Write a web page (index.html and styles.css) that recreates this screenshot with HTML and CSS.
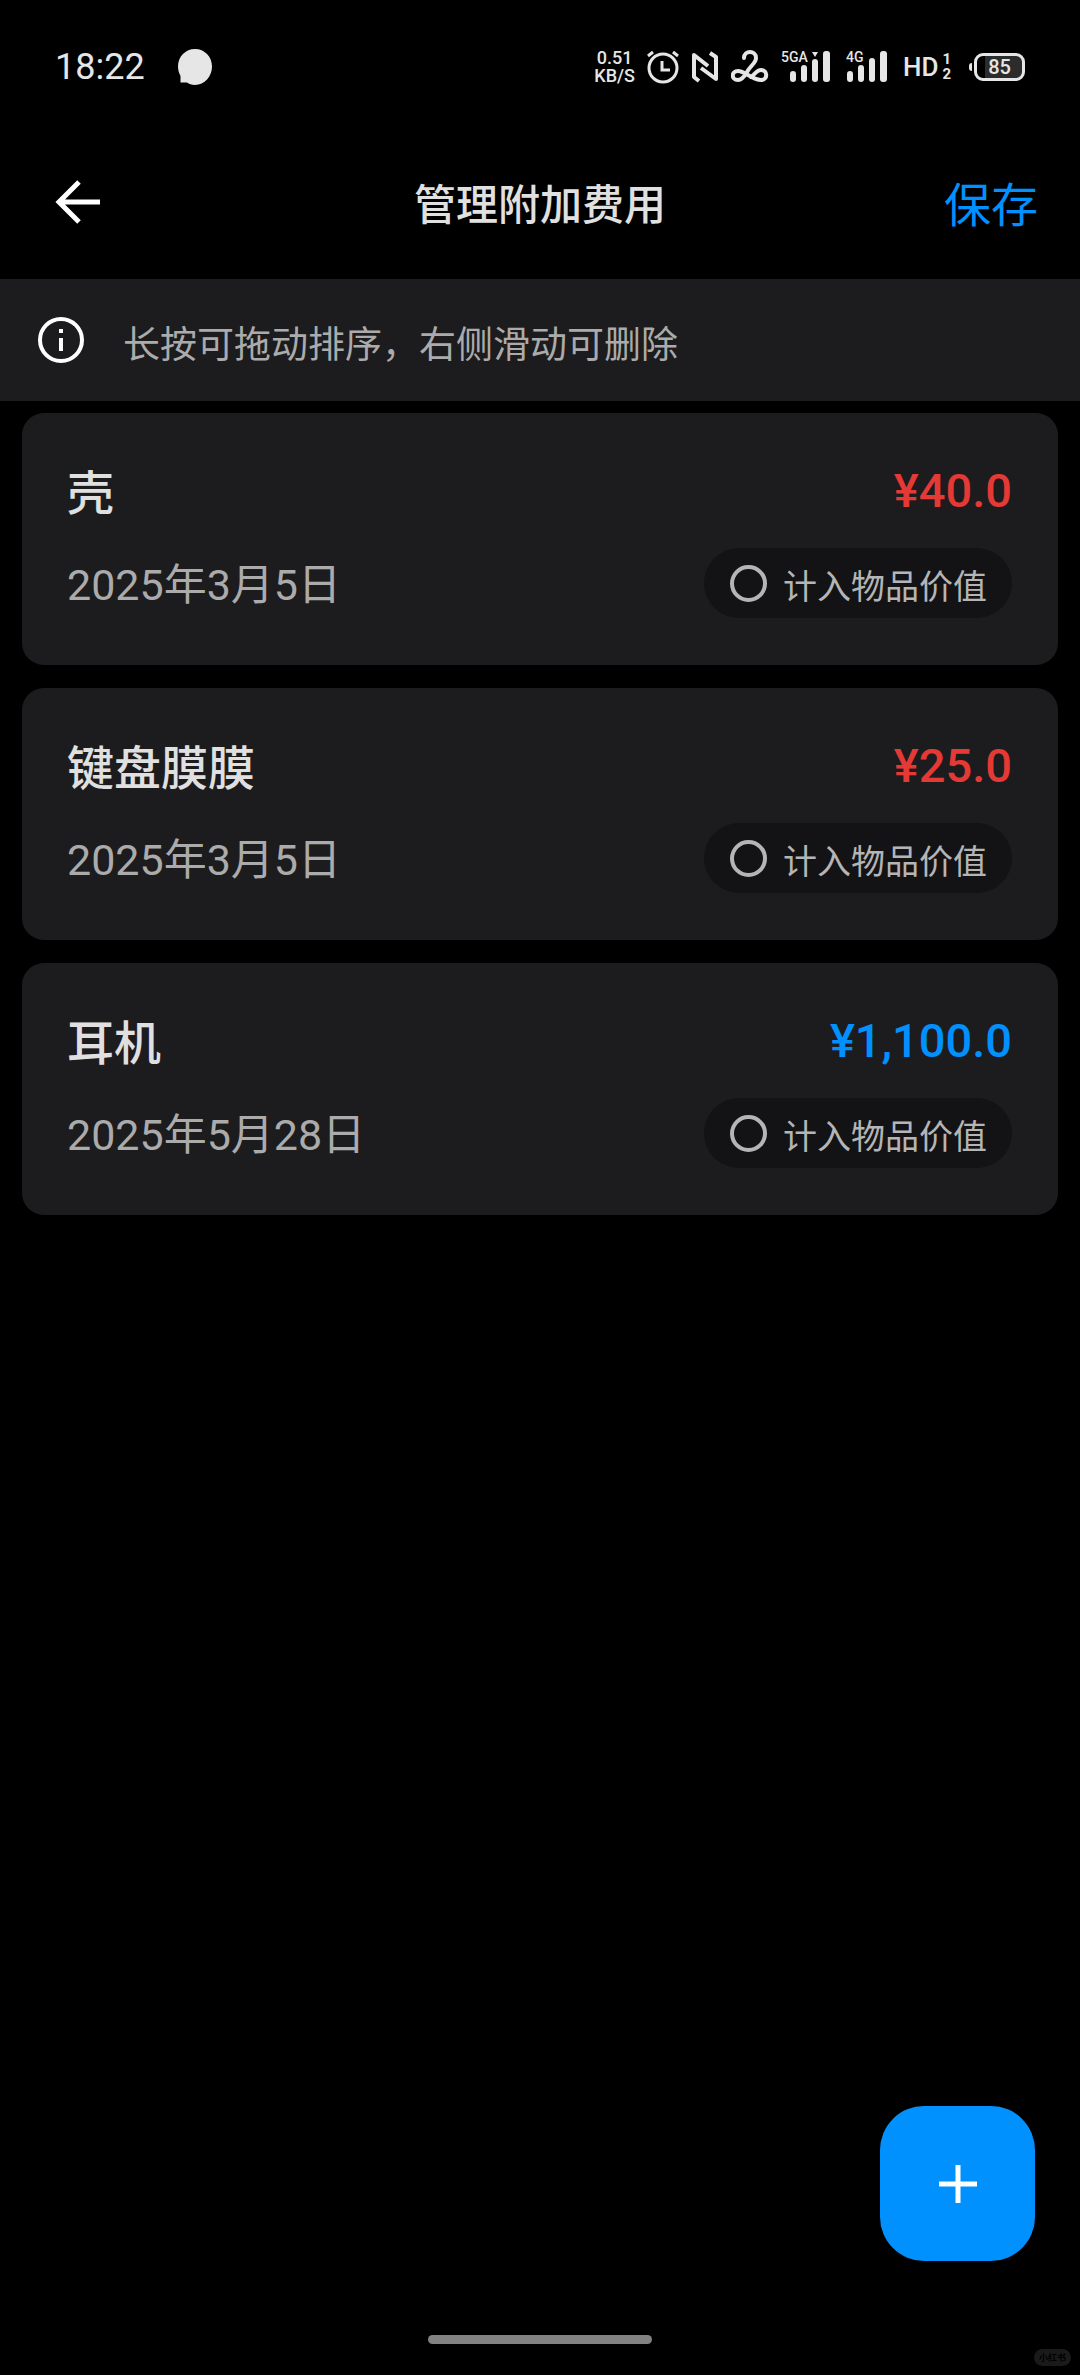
FILE: index.html
```html
<!DOCTYPE html>
<html lang="zh-CN">
<head>
<meta charset="utf-8">
<meta name="viewport" content="width=device-width, initial-scale=1">
<title>管理附加费用</title>
<link rel="stylesheet" href="styles.css">
</head>
<body>
<div class="screen">
  <div class="status-bar">
    <div class="status-left">
      <span class="clock">18:22</span>
      <svg width="36" height="36" viewBox="0 0 36 36" fill="currentColor" aria-hidden="true"><path d="M18 0C27.500 0 35 7.500 35 17.500S27.500 36 18 36C14.500 36 12 35 10 33.500H3.500V27C2 24 1 21 1 17.500C1 7.500 8.500 0 18 0Z"/></svg>
    </div>
    <div class="status-right">
      <div class="net-speed"><span>0.51</span><span>KB/S</span></div>
      <svg width="32" height="34" viewBox="0 0 32 34" fill="none" stroke="currentColor" stroke-width="3" aria-hidden="true"><circle cx="16" cy="18" r="14"/><path d="M15 11v9h8M1 6l5-4M31 6l-5-4"/></svg>
      <svg width="28" height="32" viewBox="0 0 28 32" fill="none" stroke="currentColor" stroke-width="4" stroke-linejoin="round" aria-hidden="true"><path d="M8 30L3 26V4L17 15"/><path d="M19 2L25 6V28L10 17"/></svg>
      <svg width="38" height="34" viewBox="0 0 38 34" fill="none" stroke="currentColor" stroke-width="4" stroke-linecap="round" aria-hidden="true"><path d="M13 8C13 0 25 0 25 8C25 13 20 15 16 22C12 29 9 30 7 30C0 30 0 21 7 21C14 21 21 30 30 30C37 30 37 20 30 20C26 20 24 24 20 27"/></svg>
      <svg class="signal" width="50" height="34" viewBox="0 0 50 34" fill="currentColor" role="img" aria-label="5GA"><text class="net-label" x="0" y="12">5GA</text><rect x="9" y="21" width="6" height="11" rx="3"/><rect x="20" y="15" width="6" height="17" rx="3"/><rect x="31" y="9" width="6" height="23" rx="3"/><path d="M31 2h6l-3 5z"/><rect x="42" y="1" width="7" height="31" rx="3"/></svg>
      <svg class="signal" width="42" height="34" viewBox="0 0 42 34" fill="currentColor" role="img" aria-label="4G"><text class="net-label" x="0" y="12">4G</text><rect x="1" y="21" width="6" height="11" rx="3"/><rect x="12" y="15" width="6" height="17" rx="3"/><rect x="23" y="8" width="6" height="24" rx="3"/><rect x="34" y="1" width="7" height="31" rx="3"/></svg>
      <div class="hd"><span>HD</span><span class="hd-sims"><span>1</span><span>2</span></span></div>
      <div class="battery"><span class="battery-nub"></span><span class="battery-body">85</span></div>
    </div>
  </div>

  <header class="app-bar">
    <button class="back" type="button" aria-label="返回"><svg width="46" height="46" viewBox="0 0 46 46" fill="none" stroke="currentColor" stroke-width="5" aria-hidden="true"><path d="M46 23H5M25 3L5 23L25 43"/></svg></button>
    <h1 class="title">管理附加费用</h1>
    <button class="save" type="button">保存</button>
  </header>

  <div class="notice">
    <svg width="48" height="48" viewBox="0 0 48 48" fill="none" stroke="currentColor" stroke-width="4" aria-hidden="true"><circle cx="24" cy="24" r="21"/><path d="M24 22v13M24 13v4"/></svg>
    <p>长按可拖动排序，右侧滑动可删除</p>
  </div>

  <main class="list">
    <article class="card">
      <div class="row"><h2 class="name">壳</h2><span class="price price-red">¥40.0</span></div>
      <div class="row"><time class="date" datetime="2025-03-05">2025年3月5日</time><label class="toggle"><input type="checkbox"><span>计入物品价值</span></label></div>
    </article>
    <article class="card">
      <div class="row"><h2 class="name">键盘膜膜</h2><span class="price price-red">¥25.0</span></div>
      <div class="row"><time class="date" datetime="2025-03-05">2025年3月5日</time><label class="toggle"><input type="checkbox"><span>计入物品价值</span></label></div>
    </article>
    <article class="card">
      <div class="row"><h2 class="name">耳机</h2><span class="price price-blue">¥1,100.0</span></div>
      <div class="row"><time class="date" datetime="2025-05-28">2025年5月28日</time><label class="toggle"><input type="checkbox"><span>计入物品价值</span></label></div>
    </article>
  </main>

  <button class="fab" type="button" aria-label="添加"><svg width="40" height="40" viewBox="0 0 40 40" fill="none" stroke="currentColor" stroke-width="5" aria-hidden="true"><path d="M1 20h38M20 1v38"/></svg></button>
  <div class="home-bar"></div>
  <span class="watermark">小红书</span>
</div>
</body>
</html>
```
FILE: styles.css
```css
* {
  box-sizing: border-box;
}

body {
  margin: 0;
  background: #000;
  color: #e0e0e0;
  font-family: "Noto Sans CJK SC", sans-serif;
}

h1, h2, p {
  margin: 0;
}

button {
  padding: 0;
  border: 0;
  background: none;
  font-family: inherit;
  cursor: pointer;
}

svg {
  display: block;
  flex: none;
}

.screen {
  position: relative;
  display: flex;
  flex-direction: column;
  min-height: 100vh;
}

/* Status bar */
.status-bar {
  display: flex;
  justify-content: space-between;
  align-items: center;
  height: 134px;
  padding: 0 55px;
  color: #e6e6e6;
}

.status-left {
  display: flex;
  align-items: center;
  gap: 32px;
}

.clock {
  font: 400 36px/44px Roboto, sans-serif;
}

.status-right {
  display: flex;
  align-items: center;
  gap: 12px;
}

.net-speed {
  display: flex;
  flex-direction: column;
  align-items: center;
  font: 500 18px/18px Roboto, sans-serif;
}

.net-label {
  font: 500 14px Roboto, sans-serif;
}

.signal {
  margin-right: 3px;
}

.hd {
  display: flex;
  align-items: center;
  gap: 4px;
  font: 500 26px/34px Roboto, sans-serif;
}

.hd-sims {
  display: flex;
  flex-direction: column;
  font: 700 15px/15px Roboto, sans-serif;
}

.battery {
  display: flex;
  align-items: center;
  gap: 2px;
  margin-left: 6px;
}

.battery-nub {
  width: 3px;
  height: 8px;
  border-radius: 3px 0 0 3px;
  background: #e6e6e6;
}

.battery-body {
  width: 51px;
  height: 28px;
  border: 3px solid #e6e6e6;
  border-radius: 9px;
  background: linear-gradient(90deg, #000 8px, #2c2c2c 8px);
  font: 500 20px/22px Roboto, sans-serif;
  text-align: center;
}

/* App bar */
.app-bar {
  display: grid;
  grid-template-columns: 1fr auto 1fr;
  align-items: center;
  height: 145px;
  padding: 0 42px 10px;
}

.back {
  justify-self: start;
  padding-left: 12px;
  color: #fff;
}

.title {
  font-size: 42px;
  line-height: 60px;
  font-weight: 500;
}

.save {
  justify-self: end;
  color: #0091ff;
  font-size: 47px;
  line-height: 60px;
}

/* Hint strip */
.notice {
  display: flex;
  align-items: center;
  gap: 38px;
  height: 122px;
  padding: 0 37px;
  background: #1c1c1e;
  color: #fff;
}

.notice p {
  padding-top: 4px;
  color: #ababab;
  font-size: 37px;
  line-height: 48px;
}

/* Cost cards */
.list {
  display: flex;
  flex-direction: column;
  gap: 23px;
  padding: 12px 22px;
}

.card {
  display: flex;
  flex-direction: column;
  gap: 22px;
  padding: 45px 46px 47px 45px;
  border-radius: 22px;
  background: #1c1c1e;
}

.row {
  display: flex;
  justify-content: space-between;
  align-items: center;
}

.name {
  padding-bottom: 4px;
  font-size: 47px;
  line-height: 64px;
  font-weight: 500;
}

.price {
  padding-bottom: 3px;
  font: 500 47px/60px Roboto, sans-serif;
}

.price-red {
  color: #e53935;
}

.price-blue {
  color: #0091ff;
}

.date {
  padding-top: 4px;
  color: #ababab;
  font: 400 43px/60px Roboto, "Noto Sans CJK SC", sans-serif;
}

.toggle {
  display: flex;
  align-items: center;
  gap: 16px;
  height: 70px;
  padding: 0 25px 0 26px;
  border-radius: 35px;
  background: #131315;
  color: #b5b5b5;
  font-size: 34px;
  line-height: 48px;
}

.toggle span {
  padding-top: 4px;
}

.toggle input {
  appearance: none;
  width: 37px;
  height: 37px;
  margin: 0;
  border: 4px solid #b5b5b5;
  border-radius: 50%;
}

.toggle input:checked {
  background: #0091ff;
}

/* Overlays */
.fab {
  position: fixed;
  right: 45px;
  bottom: 114px;
  display: grid;
  place-items: center;
  width: 155px;
  height: 155px;
  border-radius: 44px;
  background: #0091ff;
  color: #fff;
}

.home-bar {
  align-self: center;
  width: 224px;
  height: 9px;
  margin: auto 0 31px;
  border-radius: 5px;
  background: #828282;
}

.watermark {
  position: fixed;
  right: 9px;
  bottom: 9px;
  padding: 0 5px;
  border-radius: 9px;
  background: #1a1a1a;
  color: #000;
  font-size: 9px;
  line-height: 17px;
  font-weight: 700;
}
```
